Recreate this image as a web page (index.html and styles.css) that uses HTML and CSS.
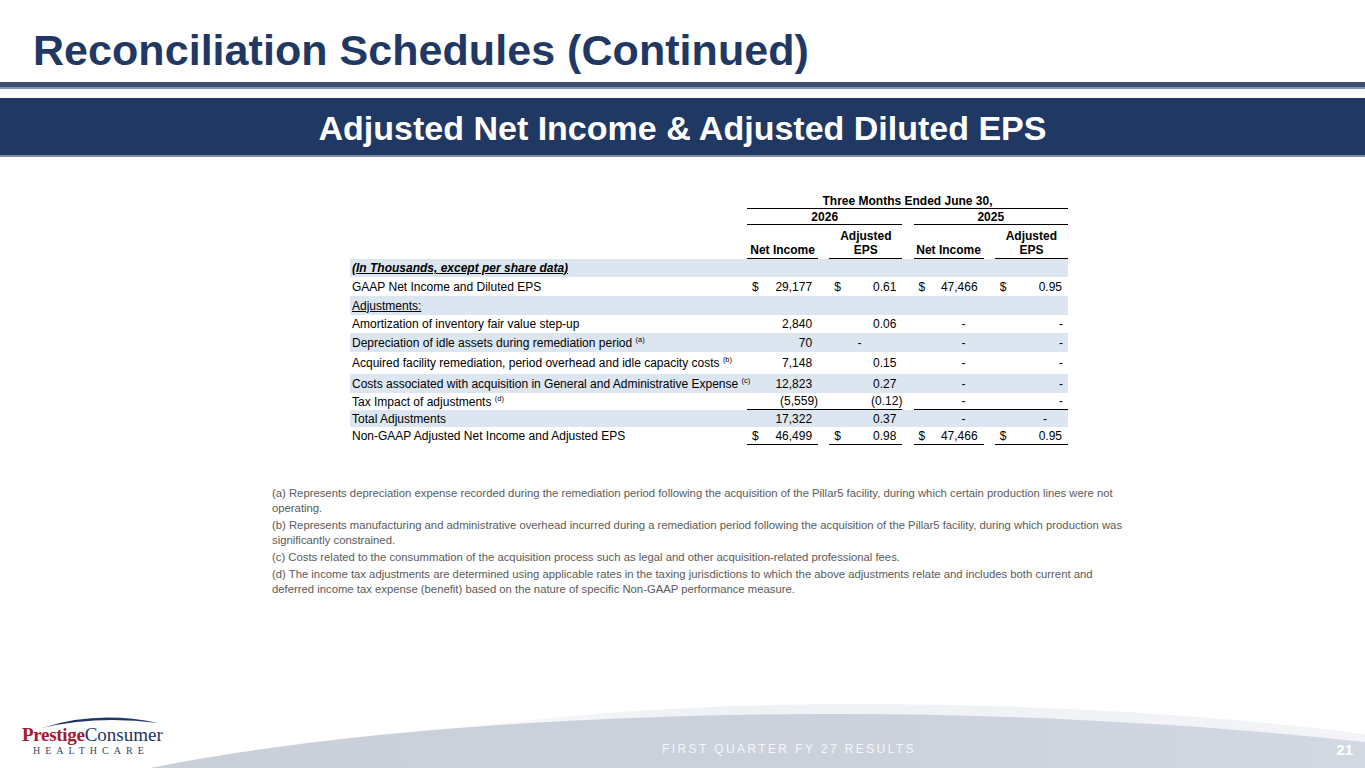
FILE: index.html
```html
<!DOCTYPE html>
<html lang="en">
<head>
<meta charset="utf-8">
<title>Reconciliation Schedules (Continued)</title>
<link rel="stylesheet" href="styles.css">
</head>
<body>
<div class="slide">
  <h1 class="title">Reconciliation Schedules (Continued)</h1>
  <div class="rule"></div>
  <div class="band"><h2 class="subtitle">Adjusted Net Income &amp; Adjusted Diluted EPS</h2></div>

  <section class="table-wrap">
    <table class="recon">
      <colgroup>
        <col class="col-label"><col class="col-a"><col class="col-gap"><col class="col-b"><col class="col-gap"><col class="col-c"><col class="col-gap"><col class="col-d">
      </colgroup>
      <thead>
        <tr class="hr1"><td></td><th colspan="7" class="ul">Three Months Ended June 30,</th></tr>
        <tr class="hr2"><td></td><th colspan="3" class="ul">2026</th><td></td><th colspan="3" class="ul">2025</th></tr>
        <tr class="hr3"><td></td><th class="ul">Net Income</th><td></td><th class="ul">Adjusted<br>EPS</th><td></td><th class="ul">Net Income</th><td></td><th class="ul">Adjusted<br>EPS</th></tr>
      </thead>
      <tbody>
        <tr class="shade r18"><td class="lbl"><span class="units">(In Thousands, except per share data)</span></td><td></td><td></td><td></td><td></td><td></td><td></td><td></td></tr>
        <tr class="r19"><td class="lbl">GAAP Net Income and Diluted EPS</td><td class="v"><span class="cur">$</span>29,177</td><td></td><td class="v"><span class="cur">$</span>0.61</td><td></td><td class="v"><span class="cur">$</span>47,466</td><td></td><td class="v"><span class="cur">$</span>0.95</td></tr>
        <tr class="shade r19"><td class="lbl"><span class="under">Adjustments:</span></td><td></td><td></td><td></td><td></td><td></td><td></td><td></td></tr>
        <tr class="r18"><td class="lbl">Amortization of inventory fair value step-up</td><td class="v">2,840</td><td></td><td class="v">0.06</td><td></td><td class="v dash-c">-</td><td></td><td class="v dash-d">-</td></tr>
        <tr class="shade r19"><td class="lbl">Depreciation of idle assets during remediation period <sup>(a)</sup></td><td class="v">70</td><td></td><td class="v dash-b">-</td><td></td><td class="v dash-c">-</td><td></td><td class="v dash-d">-</td></tr>
        <tr class="r22"><td class="lbl">Acquired facility remediation, period overhead and idle capacity costs <sup>(b)</sup></td><td class="v">7,148</td><td></td><td class="v">0.15</td><td></td><td class="v dash-c">-</td><td></td><td class="v dash-d">-</td></tr>
        <tr class="shade r19"><td class="lbl">Costs associated with acquisition in General and Administrative Expense <sup>(c)</sup></td><td class="v">12,823</td><td></td><td class="v">0.27</td><td></td><td class="v dash-c">-</td><td></td><td class="v dash-d">-</td></tr>
        <tr class="r17 line"><td class="lbl">Tax Impact of adjustments <sup>(d)</sup></td><td class="v neg">(5,559)</td><td class="bl"></td><td class="v neg">(0.12)</td><td></td><td class="v dash-c">-</td><td class="bl"></td><td class="v dash-d">-</td></tr>
        <tr class="shade r17"><td class="lbl">Total Adjustments</td><td class="v">17,322</td><td></td><td class="v">0.37</td><td></td><td class="v dash-c">-</td><td></td><td class="v dash-t">-</td></tr>
        <tr class="r18 total"><td class="lbl">Non-GAAP Adjusted Net Income and Adjusted EPS</td><td class="v"><span class="cur">$</span>46,499</td><td></td><td class="v"><span class="cur">$</span>0.98</td><td></td><td class="v"><span class="cur">$</span>47,466</td><td></td><td class="v"><span class="cur">$</span>0.95</td></tr>
      </tbody>
    </table>
  </section>

  <section class="notes">
    <p>(a) Represents depreciation expense recorded during the remediation period following the acquisition of the Pillar5 facility, during which certain production lines were not operating.</p>
    <p>(b) Represents manufacturing and administrative overhead incurred during a remediation period following the acquisition of the Pillar5 facility, during which production was significantly constrained.</p>
    <p>(c) Costs related to the consummation of the acquisition process such as legal and other acquisition-related professional fees.</p>
    <p>(d) The income tax adjustments are determined using applicable rates in the taxing jurisdictions to which the above adjustments relate and includes both current and deferred income tax expense (benefit) based on the nature of specific Non-GAAP performance measure.</p>
  </section>

  <footer class="footer">
    <svg class="swoosh" viewBox="0 700 1365 68" preserveAspectRatio="none" aria-hidden="true">
      <defs>
        <linearGradient id="sw" x1="0" y1="0" x2="1" y2="0">
          <stop offset="0" stop-color="#c9d0da"/>
          <stop offset="0.6" stop-color="#cbd2dc"/>
          <stop offset="1" stop-color="#d3d9e2"/>
        </linearGradient>
        <linearGradient id="hl" x1="0" y1="0" x2="1" y2="0">
          <stop offset="0" stop-color="#f3f5f8" stop-opacity="0"/>
          <stop offset="0.4" stop-color="#eef1f5"/>
          <stop offset="1" stop-color="#f2f4f7"/>
        </linearGradient>
      </defs>
      <path d="M230,768 C400,728 620,704 860,704 C1060,704 1240,718 1365,734 L1365,768 Z" fill="url(#hl)"/>
      <path d="M150,768 C320,734 560,715 820,714 C1020,713 1220,726 1365,742 L1365,768 Z" fill="url(#sw)"/>
    </svg>
    <div class="logo">
      <svg class="logo-arc" width="140" height="16" viewBox="0 0 140 16" aria-hidden="true">
        <path d="M20,15 Q75,-3 136,10 Q75,2 20,15 Z" fill="#1f3864"/>
      </svg>
      <div class="logo-name"><span class="prestige">Prestige</span><span class="consumer">Consumer</span></div>
      <div class="logo-sub">HEALTHCARE</div>
    </div>
    <div class="footer-text">FIRST QUARTER FY 27 RESULTS</div>
    <div class="page-num">21</div>
  </footer>
</div>
</body>
</html>
```

FILE: styles.css
```css
* { box-sizing: border-box; }
html, body { margin: 0; padding: 0; background: #fff; }
body { font-family: "Liberation Sans", Arial, sans-serif; color: #000; }

.slide {
  width: 1365px;
  height: 768px;
  overflow: hidden;
  display: flex;
  flex-direction: column;
  position: relative;
}

.title {
  margin: 0;
  padding: 29px 0 0 33px;
  font-size: 43px;
  line-height: 43px;
  font-weight: bold;
  color: #1f3864;
  letter-spacing: 0.05px;
}

.rule {
  margin-top: 10px;
  height: 7px;
  background: #3d5073;
  border-bottom: 2px solid #8594ae;
}

.band {
  margin-top: 9px;
  height: 59px;
  background: #1f3864;
  border-bottom: 2px solid #7f8ca3;
}
.subtitle {
  margin: 0;
  padding-top: 3px;
  text-align: center;
  font-size: 34px;
  line-height: 54px;
  font-weight: bold;
  color: #fff;
}

.table-wrap {
  margin-top: 37px;
  padding-left: 350px;
}
.recon {
  border-collapse: separate;
  border-spacing: 0;
  table-layout: fixed;
  width: 718px;
  font-size: 12px;
  line-height: 14px;
}
.col-label { width: 391px; }
.col-a { width: 70px; }
.col-gap { width: 11px; }
.col-b { width: 72px; }
.col-c { width: 69px; }
.col-d { width: 72px; }

.recon td, .recon th { padding: 0; white-space: nowrap; }
.recon th { font-weight: bold; text-align: center; vertical-align: bottom; }
.recon .ul { border-bottom: 1px solid #000; }
.hr1 th { height: 15px; }
.hr2 th { height: 16px; }
.hr3 th { height: 34px; padding-bottom: 1px; }

.recon tbody td { vertical-align: middle; }
.shade { background: #dce6f1; }
.r17 td { height: 17px; }
.r18 td { height: 18px; }
.r19 td { height: 19px; }
.r22 td { height: 22px; }

.lbl { padding-left: 2px !important; }
.units { font-weight: bold; font-style: italic; text-decoration: underline; }
.under { text-decoration: underline; }
.recon sup {
  font-size: 7.5px;
  line-height: 0;
  vertical-align: 5px;
}

.v { text-align: right; padding: 0 6px 0 5px !important; }
.cur { float: left; }
.neg { padding-right: 0 !important; }
.dash-b { padding-right: 41px !important; }
.dash-c { padding-right: 18px !important; }
.dash-d { padding-right: 5px !important; }
.dash-t { padding-right: 21px !important; }

.line td.v, .line td.bl { border-bottom: 1px solid #000; }
.total td.v { border-bottom: 1px solid #000; }

.notes {
  margin-top: 41px;
  padding-left: 272px;
  width: 1130px;
  font-size: 11.3px;
  line-height: 15px;
  color: #5a5a5a;
}
.notes p { margin: 0 0 2px 0; }

.footer {
  margin-top: auto;
  height: 68px;
  position: relative;
  display: grid;
  grid-template-columns: 640px 1fr auto;
  align-items: start;
  padding-left: 22px;
  padding-right: 12px;
}
.swoosh {
  position: absolute;
  left: 0;
  top: 0;
  width: 1365px;
  height: 68px;
  z-index: 0;
}
.logo, .footer-text, .page-num { position: relative; z-index: 1; }

.logo { padding-top: 13px; }
.logo-arc { display: block; }
.logo-name {
  margin-top: -2px;
  font-family: "Liberation Serif", "Times New Roman", serif;
  font-size: 19px;
  line-height: 16px;
  white-space: nowrap;
}
.prestige { color: #a01c32; font-weight: bold; letter-spacing: -0.3px; }
.consumer { color: #24355a; }
.logo-sub {
  margin-top: 1.5px;
  padding-left: 11px;
  font-family: "Liberation Serif", "Times New Roman", serif;
  font-size: 10px;
  line-height: 11px;
  letter-spacing: 5px;
  color: #3a4866;
}

.footer-text {
  margin-top: 43px;
  font-size: 12px;
  line-height: 13px;
  letter-spacing: 2.4px;
  color: #f4f6f9;
  white-space: nowrap;
}
.page-num {
  margin-top: 41px;
  font-size: 15px;
  line-height: 17px;
  font-weight: bold;
  color: #fff;
}
```
